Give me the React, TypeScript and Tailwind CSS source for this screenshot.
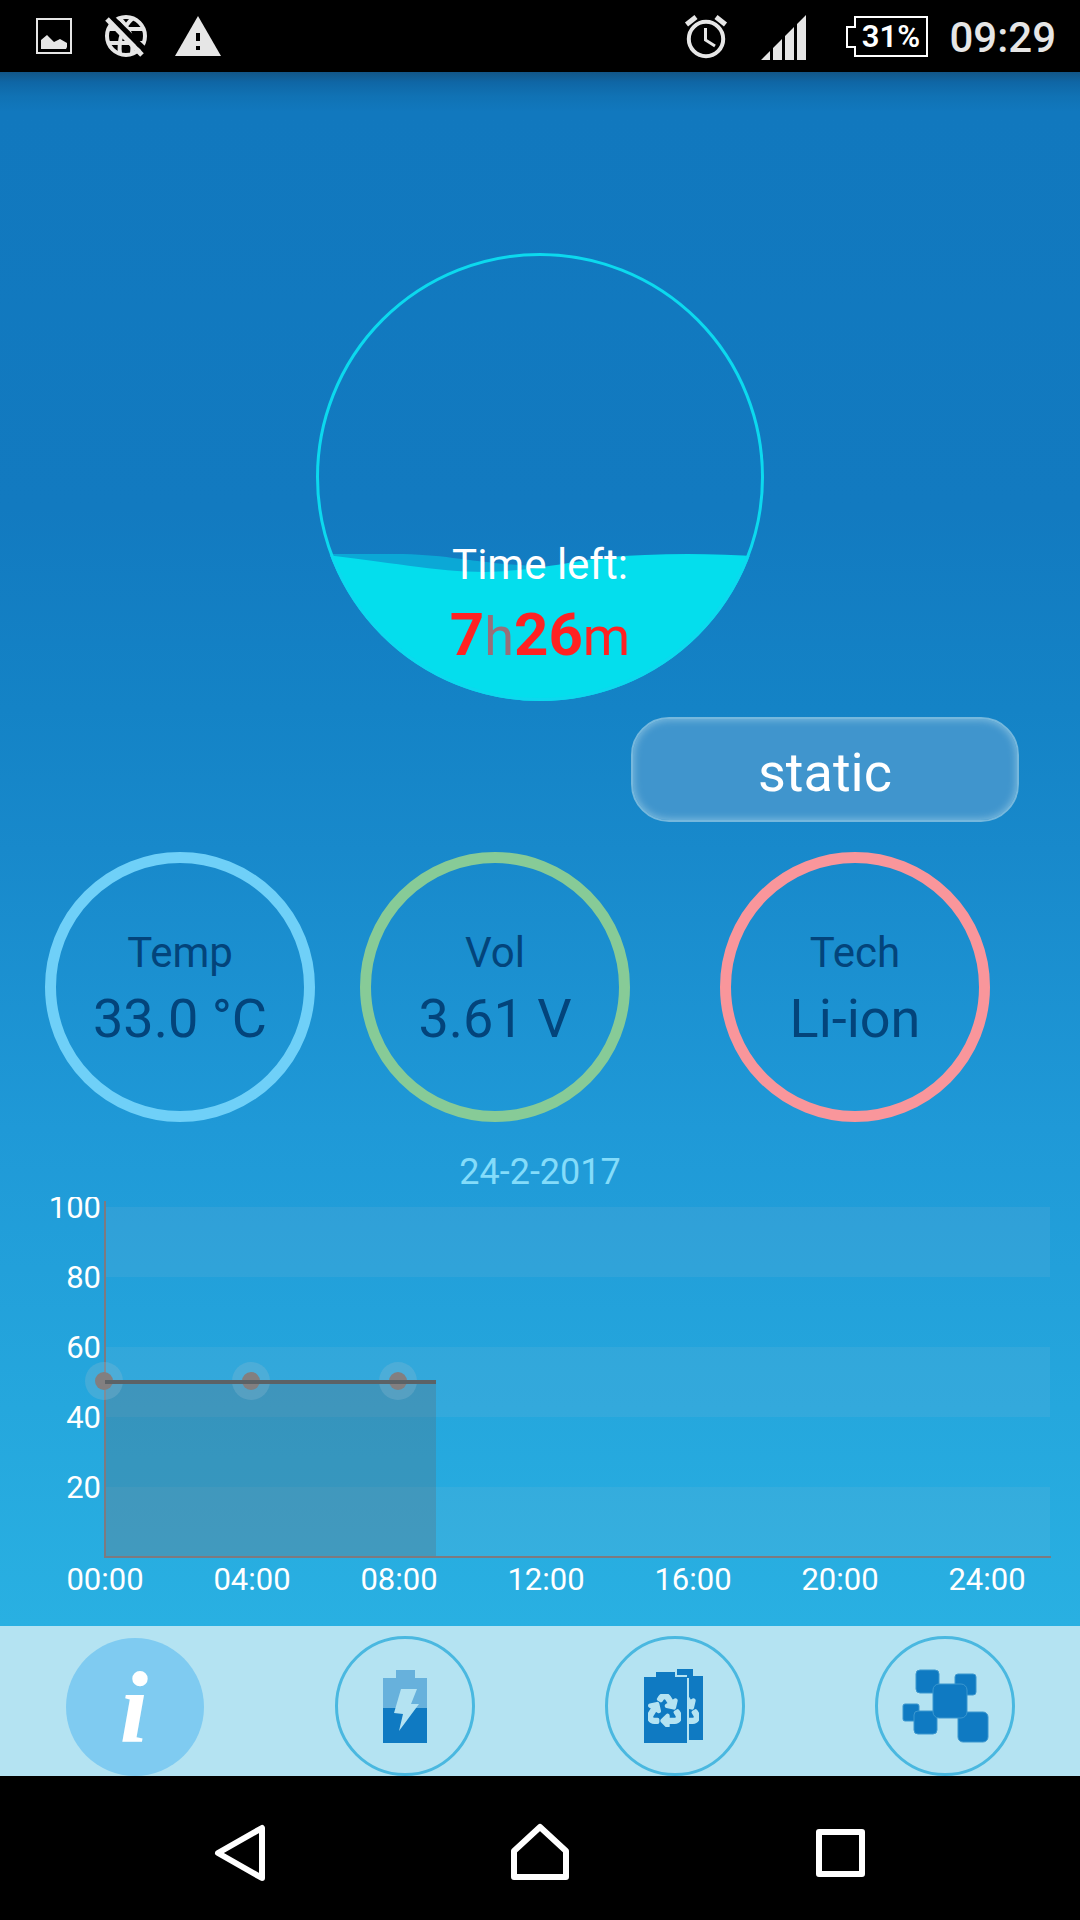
import React from "react";
import { FaRecycle } from "react-icons/fa";

const ICON = "#e6e6e6";
const BLUE = "#0f7ac2";
const PALE = "#b4e3f2";

function StatusBar() {
  return (
    <header className="flex h-[72px] items-center bg-black pl-9 pr-6">
      <svg width="36" height="36" viewBox="0 0 36 36" aria-label="Image saved">
        <rect x="1" y="1" width="34" height="34" fill="none" stroke={ICON} strokeWidth="2" />
        <path d="M5 31V22L11 17L18 24L24 21L31 25V29L30 31Z" fill={ICON} />
      </svg>
      <svg className="ml-8" width="44" height="44" viewBox="0 0 44 44" aria-label="No internet">
        <g fill="none" stroke={ICON} strokeWidth="4">
          <circle cx="22" cy="22" r="19" />
          <path d="M5 15H39M5 29H39M15 4C24 12 30 24 28 40M29 4C20 12 14 24 16 40" />
        </g>
        <path d="M8 0L46 37L42 41L4 4Z" fill="#000" />
        <path d="M3 5L38 41" stroke={ICON} strokeWidth="5" />
      </svg>
      <svg className="ml-[27px]" width="46" height="40" viewBox="0 0 46 40" aria-label="Warning">
        <path d="M23 0L46 40H0Z" fill={ICON} />
        <path d="M21 17h4v8h-4zM21 30h4v4h-4z" fill="#000" />
      </svg>
      <div className="ml-auto flex items-center pt-0.5">
        <svg width="44" height="44" viewBox="0 0 44 44" aria-label="Alarm">
          <g fill="none" stroke={ICON}>
            <circle cx="22" cy="24" r="17.2" strokeWidth="4" />
            <path d="M21.500 13V25L31 31" strokeWidth="3" />
            <path d="M2.500 9.500L12 2M41.500 9.500L32 2" strokeWidth="5" />
          </g>
        </svg>
        <svg className="ml-[33px]" width="46" height="46" viewBox="0 0 46 46" aria-label="Signal">
          <path
            d="M0 46L9 37V46ZM12 34L21 25V46H12ZM24 22L33 13V46H24ZM36 10L45 1V46H36Z"
            fill={ICON}
          />
        </svg>
        <svg className="ml-[39px]" width="82" height="42" viewBox="0 0 82 42" aria-label="Battery 31%">
          <path d="M9 1H81V40H9V31H1V11H9Z" fill="none" stroke="#fff" strokeWidth="2" />
          <text x="45" y="31" textAnchor="middle" fill="#fff" fontSize="31" fontWeight="600">
            31%
          </text>
        </svg>
        <time className="ml-[21px] pt-0.5 text-[42px] leading-none font-medium text-[#e6e6e6]">09:29</time>
      </div>
    </header>
  );
}

function Gauge() {
  return (
    <svg className="mx-auto mt-[180px] block" width="450" height="450" viewBox="0 0 450 450">
      <defs>
        <clipPath id="bowl">
          <circle cx="225" cy="225" r="224" />
        </clipPath>
      </defs>
      <g clipPath="url(#bowl)">
        <path d="M0 302H80C135 302 160 312 225 314V330H0Z" fill="#0ba8d6" />
        <path
          d="M0 302C70 309 120 320 170 320C240 318 260 305 330 303C370 301 410 302 450 305V450H0Z"
          fill="#04deed"
        />
      </g>
      <circle cx="225" cy="225" r="222.500" fill="none" stroke="#0cd9ee" strokeWidth="3" />
      <text x="225" y="327" textAnchor="middle" fill="#fff" fontSize="42">
        Time left:
      </text>
      <text x="225" y="403" textAnchor="middle" fill="#ff2222" fontSize="60" fontWeight="700">
        7
        <tspan fontSize="54" fontWeight="400" fill="#96707a">h</tspan>
        26
        <tspan fontSize="54" fontWeight="400">m</tspan>
      </text>
    </svg>
  );
}

function Ring({ label, value, className }: { label: string; value: string; className: string }) {
  return (
    <div
      className={
        "flex size-[270px] flex-col items-center justify-center rounded-full border-[11px] pt-2 text-[#03447b] " +
        className
      }
    >
      <span className="text-[42px] leading-[56px]">{label}</span>
      <span className="text-[54px] leading-[76px]">{value}</span>
    </div>
  );
}

function Chart() {
  const hours = ["00:00", "04:00", "08:00", "12:00", "16:00", "20:00", "24:00"];
  const levels = [100, 80, 60, 40, 20];
  return (
    <svg className="block h-auto w-full" viewBox="0 0 1080 429" aria-label="Battery level by hour">
      {[10, 150, 290].map((y) => (
        <rect key={y} x="105" y={y} width="945" height="70" fill="#9fbdd2" fillOpacity="0.12" />
      ))}
      <rect x="105" y="184" width="331" height="176" fill="#5d6974" fillOpacity="0.3" />
      <path d="M105 4V360H1051" fill="none" stroke="#7d7a80" strokeWidth="2" />
      {[104, 251, 398].map((x) => (
        <g key={x}>
          <circle cx={x} cy="184" r="19" fill="#8ab8d0" fillOpacity="0.3" />
          <circle cx={x} cy="184" r="9" fill="#827f80" />
        </g>
      ))}
      <path d="M105 185H436" stroke="#5c6266" strokeWidth="4" />
      <g fill="#fff" fontSize="31">
        {levels.map((v, i) => (
          <text key={v} x="101" y={21 + i * 70} textAnchor="end">
            {v}
          </text>
        ))}
        {hours.map((h, i) => (
          <text key={h} x={105 + i * 147} y="393" textAnchor="middle">
            {h}
          </text>
        ))}
      </g>
    </svg>
  );
}

function Tab({ label, selected, children }: { label: string; selected?: boolean; children: React.ReactNode }) {
  return (
    <button type="button" aria-label={label} aria-pressed={!!selected} className="flex flex-1 items-end justify-center">
      <svg width="140" height="140" viewBox="0 0 140 140">
        {selected ? (
          <circle cx="70" cy="71" r="69" fill="#7fcbf1" />
        ) : (
          <circle cx="70" cy="70" r="68.500" fill="none" stroke="#4ab8e0" strokeWidth="3" />
        )}
        {children}
      </svg>
    </button>
  );
}

function TabBar() {
  return (
    <nav className="flex h-[150px] bg-[#b4e3f2]">
      <Tab label="Info" selected>
        <text
          x="69"
          y="106"
          textAnchor="middle"
          fill="#fff"
          fontSize="102"
          fontStyle="italic"
          fontWeight="700"
          fontFamily="Liberation Serif, serif"
        >
          i
        </text>
      </Tab>
      <Tab label="Charge">
        <path d="M48 72V42H61V34H80V42H92V72Z" fill="#67b1dc" />
        <rect x="48" y="72" width="44" height="35" fill={BLUE} />
        <path d="M66 53H82L76 68H84L64 95L68 78L59 77Z" fill={PALE} />
      </Tab>
      <Tab label="Battery health">
        <defs>
          <clipPath id="rear">
            <rect x="84" y="30" width="20" height="80" />
          </clipPath>
        </defs>
        <path d="M39 107V41H51V36H70V41H82V107Z" fill={BLUE} />
        <path d="M72 33H88V40H98V104H84V42H82V39H72Z" fill={BLUE} />
        <g stroke={PALE} strokeWidth="34">
          <FaRecycle x="43" y="58" size={33} color={PALE} stroke={PALE} strokeWidth={34} />
          <g clipPath="url(#rear)">
            <FaRecycle x="61" y="58" size={33} color={PALE} stroke={PALE} strokeWidth={34} />
          </g>
        </g>
      </Tab>
      <Tab label="Apps">
        <g fill={BLUE} stroke="#3b97cf" strokeWidth="1">
          <rect x="41" y="34" width="23" height="23" rx="4" />
          <rect x="80" y="38" width="21" height="21" rx="3" />
          <rect x="28" y="68" width="16" height="17" rx="2" />
          <rect x="39" y="75" width="23" height="23" rx="4" />
          <rect x="83" y="76" width="30" height="30" rx="5" />
          <rect x="58" y="48" width="34" height="34" rx="6" />
        </g>
      </Tab>
    </nav>
  );
}

function SystemNav() {
  const stroke = {
    fill: "none",
    stroke: "#fff",
    strokeWidth: 6,
    strokeLinejoin: "round" as const,
  };
  return (
    <nav className="flex h-36 justify-center gap-[240px] bg-black pt-2.5">
      <button type="button" aria-label="Back" className="flex items-center">
        <svg width="60" height="60" viewBox="0 0 60 60">
          <path d="M52 5V55L8 30Z" {...stroke} />
        </svg>
      </button>
      <button type="button" aria-label="Home" className="flex items-center">
        <svg width="60" height="60" viewBox="0 0 60 60">
          <path d="M30 4L56 28V54H4V28Z" {...stroke} />
        </svg>
      </button>
      <button type="button" aria-label="Recent apps" className="flex items-center">
        <svg width="60" height="60" viewBox="0 0 60 60">
          <rect x="9" y="9" width="43" height="42" {...stroke} />
        </svg>
      </button>
    </nav>
  );
}

export default function App() {
  return (
    <div className="flex min-h-screen flex-col font-['Roboto',sans-serif]">
      <StatusBar />
      <main className="flex-1 bg-[linear-gradient(to_bottom,#125687_0px,#0f66a5_10px,#1072b4_24px,#1178be_40px,#127ac0_28%,#1483c6_41%,#1889cb_50%,#1f99d7_68%,#25a7dd_86%,#29b0e2_100%)]">
        <Gauge />
        <div className="flex justify-end pt-[15px] pr-[61px]">
          <button
            type="button"
            className="h-[105px] w-[388px] rounded-[38px] border-2 border-[#76b8dd] bg-[#4095cd] pt-1.5 text-[54px] leading-none text-white shadow-[inset_0_0_8px_#8cc4e2]"
          >
            static
          </button>
        </div>
        <section className="flex gap-[45px] pt-[30px] pl-[45px]">
          <Ring label="Temp" value="33.0 °C" className="border-[#6fd0f8]" />
          <Ring label="Vol" value="3.61 V" className="border-[#87cb97]" />
          <Ring label="Tech" value="Li-ion" className="ml-[45px] border-[#f9969b]" />
        </section>
        <p className="flex h-[75px] items-center justify-center pt-6 text-[36px] leading-none text-[#84dcfa]">
          24-2-2017
        </p>
        <Chart />
      </main>
      <TabBar />
      <SystemNav />
    </div>
  );
}
